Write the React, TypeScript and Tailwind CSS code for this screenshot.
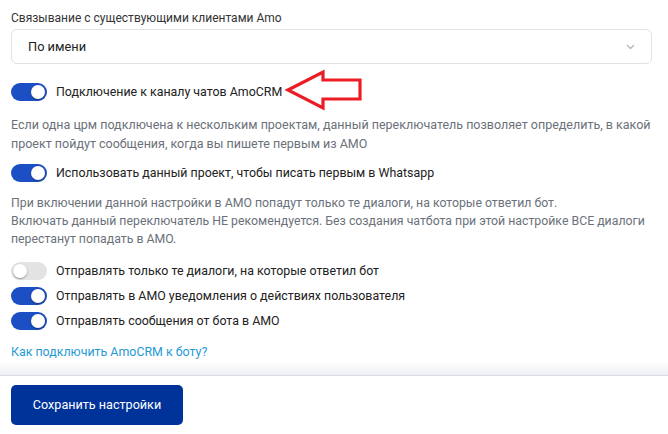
import React from "react";

function Toggle({ on }: { on: boolean }) {
  return (
    <div
      className={
        "relative h-[18px] w-[36px] shrink-0 rounded-full " +
        (on ? "bg-[#1d4fc4]" : "bg-[#e3e3e3]")
      }
    >
      <div
        className={
          "absolute top-[2px] h-[14px] w-[14px] rounded-full bg-white shadow-[0_1px_2px_rgba(0,0,0,0.35)] " +
          (on ? "left-[20px]" : "left-[2px]")
        }
      />
    </div>
  );
}

function Row({ on, children }: { on: boolean; children: React.ReactNode }) {
  return (
    <div className="flex items-center gap-[9px]">
      <Toggle on={on} />
      <span className="text-[12.4px] leading-[18px] text-[#222]">{children}</span>
    </div>
  );
}

export default function App() {
  return (
    <div
      className="relative h-[434px] w-[668px] overflow-hidden bg-white"
      style={{ fontFamily: 'Roboto, "Noto Sans", sans-serif' }}
    >
      <div className="pl-[11px] pr-[12px] pt-[10px]">
        <div className="text-[12px] leading-[16px] text-[#333]">
          Связывание с существующими клиентами Amo
        </div>
        <div className="mr-[4px] mt-[3px] flex h-[35px] items-center justify-between rounded-[6px] border border-[#e2e2e2] pl-[16px] pr-[16px]">
          <span className="text-[12.8px] text-[#222]">По имени</span>
          <svg width="9" height="6" viewBox="0 0 9 6" fill="none">
            <path d="M1 1l3.5 3.5L8 1" stroke="#b5b8c0" strokeWidth="1.3" />
          </svg>
        </div>

        <div className="mt-[19px]">
          <Row on>Подключение к каналу чатов AmoCRM</Row>
        </div>
        <div className="mt-[14px] text-[12.5px] leading-[19px] text-[#6b717a]">
          Если одна црм подключена к нескольким проектам, данный переключатель позволяет определить, в какой
          проект пойдут сообщения, когда вы пишете первым из АМО
        </div>
        <div className="mt-[11px]">
          <Row on>Использовать данный проект, чтобы писать первым в Whatsapp</Row>
        </div>
        <div className="mt-[12px] text-[12.3px] leading-[18px] text-[#6b717a]">
          При включении данной настройки в АМО попадут только те диалоги, на которые ответил бот.
          <br />
          Включать данный переключатель НЕ рекомендуется. Без создания чатбота при этой настройке ВСЕ диалоги
          перестанут попадать в АМО.
        </div>
        <div className="mt-[14px] flex flex-col gap-[7px]">
          <Row on={false}>Отправлять только те диалоги, на которые ответил бот</Row>
          <Row on>Отправлять в АМО уведомления о действиях пользователя</Row>
          <Row on>Отправлять сообщения от бота в АМО</Row>
        </div>
        <div className="mt-[13px] text-[12.4px] leading-[18px] text-[#1f9ad6]">Как подключить AmoCRM к боту?</div>
      </div>

      <div className="absolute left-0 right-0 top-[361px] h-[14px] bg-gradient-to-b from-white to-[#eef0f4]" />
      <div className="absolute left-0 right-0 top-[375px] border-t border-[#d9dce3] bg-white pl-[11px] pt-[9px]">
        <button className="flex h-[40px] w-[172px] items-center justify-center rounded-[5px] bg-[#003399] text-[12.6px] text-white">
          Сохранить настройки
        </button>
      </div>

      <svg className="pointer-events-none absolute left-0 top-0" width="668" height="434">
        <polygon
          points="288,90 323,72 323,80 360,80 360,99 323,99 323,108"
          fill="none"
          stroke="#ec1c24"
          strokeWidth="3.2"
          strokeLinejoin="miter"
        />
      </svg>
    </div>
  );
}
